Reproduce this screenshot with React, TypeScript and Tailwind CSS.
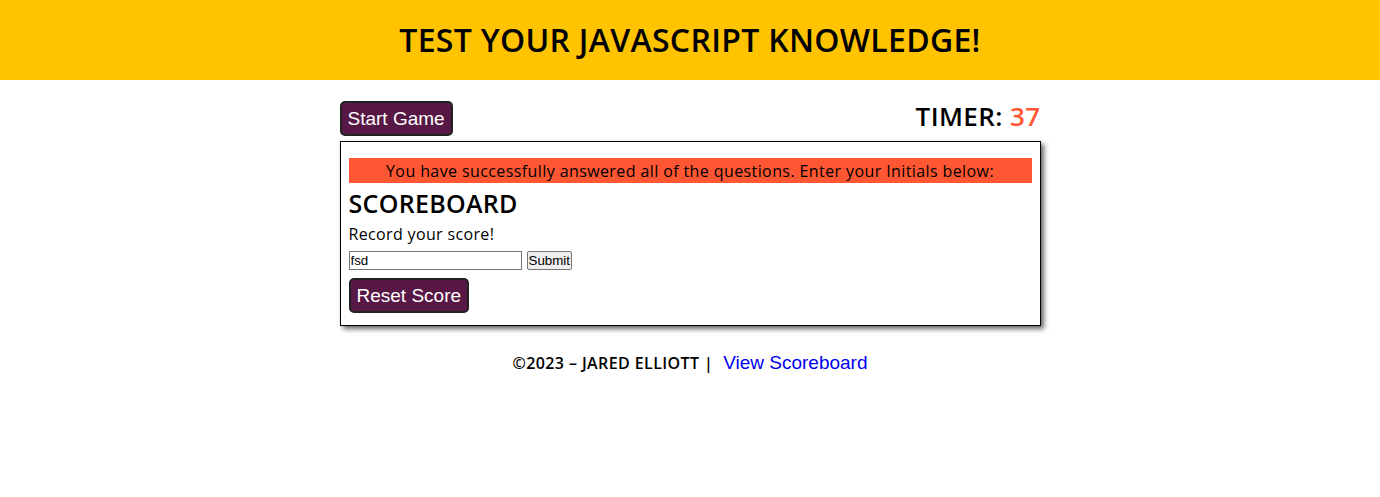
import React from 'react';

const trebuchet = "font-['Open_Sans','DejaVu_Sans',sans-serif]";

export default function App() {
  return (
    <div className="min-h-screen bg-white text-black">
      <header className="h-[80px] bg-[#FFC300] flex items-center justify-center">
        <h1 className={`${trebuchet} text-[32px] font-semibold tracking-[0.3px]`}>TEST YOUR JAVASCRIPT KNOWLEDGE!</h1>
      </header>

      <main className="w-[701px] mx-auto mt-[21px]">
        <div className="flex items-start justify-between">
          <button className="bg-[#581845] text-white font-['Liberation_Sans',Arial,sans-serif] text-[19px] leading-none px-[6px] h-[35px] rounded-[5px] border-2 border-[#222]">
            Start Game
          </button>
          <div className={`${trebuchet} text-[26px] font-semibold leading-none mt-[2px] tracking-[0.4px]`}>
            TIMER: <span className="text-[#FF5733]">37</span>
          </div>
        </div>

        <section className="mt-[5px] border border-black shadow-[3px_3px_5px_rgba(0,0,0,0.6)] px-[8px] pt-[16px] pb-[12px]">
          <div className={`${trebuchet} bg-[#FF5733] h-[25px] flex items-center justify-center text-[16px] tracking-[0.4px]`}>
            You have successfully answered all of the questions. Enter your Initials below:
          </div>
          <h2 className={`${trebuchet} text-[25px] font-semibold leading-none mt-[8px] tracking-[0.3px]`}>SCOREBOARD</h2>
          <p className={`${trebuchet} text-[16px] mt-[10px] leading-none tracking-[0.35px]`}>Record your score!</p>
          <div className="flex items-center gap-[5px] mt-[9px]">
            <input
              defaultValue="fsd"
              className="w-[173px] h-[19px] border border-[#767676] px-[1px] text-[13.33px] font-['Liberation_Sans',Arial,sans-serif]"
            />
            <button className="h-[19px] px-[1px] border border-[#767676] bg-[#efefef] rounded-[2px] text-[13.33px] leading-none font-['Liberation_Sans',Arial,sans-serif]">
              Submit
            </button>
          </div>
          <button className="mt-[8px] bg-[#581845] text-white font-['Liberation_Sans',Arial,sans-serif] text-[19px] leading-none px-[6px] h-[35px] rounded-[5px] border-2 border-[#222]">
            Reset Score
          </button>
        </section>
      </main>

      <footer className="mt-[23px] flex items-center justify-center gap-[10px]">
        <span className={`${trebuchet} text-[16px] font-semibold tracking-[0.4px]`}>©2023 – JARED ELLIOTT |</span>
        <a href="#" className="text-[#0000EE] text-[19px] font-['Liberation_Sans',Arial,sans-serif]">View Scoreboard</a>
      </footer>
    </div>
  );
}
